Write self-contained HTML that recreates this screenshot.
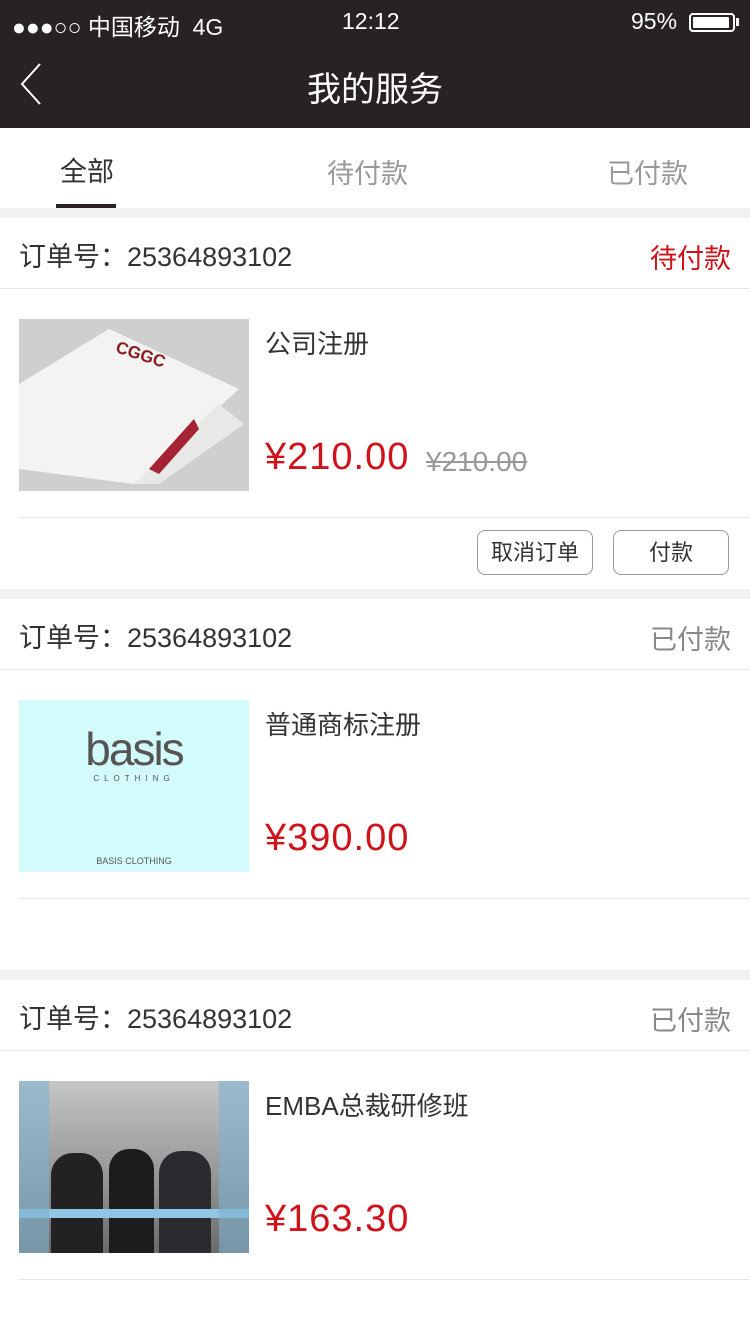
<!DOCTYPE html><html><head><meta charset="utf-8"><style>
*{margin:0;padding:0;box-sizing:border-box}
body{width:750px;height:1334px;background:#fff;font-family:"Liberation Sans","Noto Sans CJK SC",sans-serif;position:relative;overflow:hidden;color:#333}
.a{position:absolute}
.top{left:0;top:0;width:750px;height:128px;background:#282125;color:#fff}
.gap{left:0;width:750px;height:10px;background:#f2f2f2}
.line{height:1px;background:#e5e5e5}
.ono{left:19px;font-size:27px;color:#333}
.st{right:19px;font-size:27px}
.img{left:19px;width:230px;height:172px}
.t{left:265px;font-size:26px;color:#333}
.p{left:265px;font-size:38px;color:#d0121b;letter-spacing:1px}
.btn{top:530px;height:45px;border:1px solid #999;border-radius:8px;font-size:22px;text-align:center;line-height:43px;color:#333}
</style></head><body>
<div class="a top">
<div class="a" style="left:12px;top:8px;font-size:23px">●●●○○ 中国移动&nbsp; 4G</div>
<div class="a" style="left:342px;top:8px;font-size:23px">12:12</div>
<div class="a" style="left:631px;top:8px;font-size:23px">95%</div>
<div class="a" style="left:689px;top:13px;width:46px;height:19px;border:2px solid #fff;border-radius:4px;padding:2px"><div style="width:36px;height:11px;background:#fff;border-radius:1px"></div></div>
<div class="a" style="left:736px;top:18px;width:3px;height:8px;background:#fff"></div>
<svg class="a" style="left:18px;top:62px" width="26" height="44"><path d="M22 2 L4 22 L22 42" fill="none" stroke="#fff" stroke-width="2"/></svg>
<div class="a" style="left:0;width:750px;top:62px;text-align:center;font-size:34px">我的服务</div>
</div>
<div class="a" style="left:60px;top:150px;font-size:27px;color:#333">全部</div>
<div class="a" style="left:327px;top:152px;font-size:27px;color:#999">待付款</div>
<div class="a" style="left:607px;top:152px;font-size:27px;color:#999">已付款</div>
<div class="a" style="left:56px;top:204px;width:60px;height:4px;background:#282125"></div>
<div class="a gap" style="top:208px"></div>

<div class="a ono" style="top:235px">订单号：25364893102</div>
<div class="a st" style="top:237px;color:#d0121b">待付款</div>
<div class="a line" style="left:0;width:750px;top:288px"></div>
<div class="a img" style="top:319px;background:#cfcfcd;overflow:hidden">
<svg class="a" style="left:0;top:0" width="230" height="172"><polygon points="0,65 90,10 220,70 115,165 0,150" fill="#f3f3f1"/><polygon points="115,165 200,85 225,105 140,165" fill="#e8e8e6"/><polygon points="130,150 175,100 180,110 140,155" fill="#a52333"/></svg>
<div class="a" style="left:96px;top:26px;font-size:17px;font-weight:bold;color:#8a1a24;transform:rotate(18deg)">CGGC</div></div>
<div class="a t" style="top:324px">公司注册</div>
<div class="a p" style="top:436px">¥210.00</div>
<div class="a" style="left:426px;top:446px;font-size:28px;color:#999;text-decoration:line-through">¥210.00</div>
<div class="a line" style="left:18px;width:732px;top:517px"></div>
<div class="a btn" style="left:477px;width:116px">取消订单</div>
<div class="a btn" style="left:613px;width:116px">付款</div>
<div class="a gap" style="top:589px"></div>

<div class="a ono" style="top:616px">订单号：25364893102</div>
<div class="a st" style="top:618px;color:#888">已付款</div>
<div class="a line" style="left:0;width:750px;top:669px"></div>
<div class="a img" style="top:700px;background:#d4fbfc"><div class="a" style="left:0;width:230px;top:22px;text-align:center;font-size:46px;color:#555;letter-spacing:-2px">basis</div><div class="a" style="left:0;width:230px;top:74px;text-align:center;font-size:8px;letter-spacing:5px;color:#555">CLOTHING</div><div class="a" style="left:0;width:230px;top:156px;text-align:center;font-size:9px;color:#555">BASIS CLOTHING</div></div>
<div class="a t" style="top:705px">普通商标注册</div>
<div class="a p" style="top:817px">¥390.00</div>
<div class="a line" style="left:18px;width:732px;top:898px"></div>
<div class="a gap" style="top:970px"></div>

<div class="a ono" style="top:997px">订单号：25364893102</div>
<div class="a st" style="top:999px;color:#888">已付款</div>
<div class="a line" style="left:0;width:750px;top:1050px"></div>
<div class="a img" style="top:1081px;background:linear-gradient(#c4c6c6,#9a9c9c 50%,#6a6a6a);overflow:hidden"><div class="a" style="left:32px;top:72px;width:52px;height:100px;background:#222;border-radius:22px 22px 0 0"></div><div class="a" style="left:90px;top:68px;width:45px;height:104px;background:#1c1c1c;border-radius:20px 20px 0 0"></div><div class="a" style="left:140px;top:70px;width:52px;height:102px;background:#2a2a2f;border-radius:22px 22px 0 0"></div><div class="a" style="left:0;top:128px;width:230px;height:9px;background:#8fc6e6"></div><div class="a" style="left:0;top:0;width:30px;height:172px;background:#7fb2cf;opacity:.6"></div><div class="a" style="left:200px;top:0;width:30px;height:172px;background:#7fb2cf;opacity:.6"></div></div>
<div class="a t" style="top:1086px">EMBA总裁研修班</div>
<div class="a p" style="top:1198px">¥163.30</div>
<div class="a line" style="left:18px;width:732px;top:1279px"></div>
</body></html>
